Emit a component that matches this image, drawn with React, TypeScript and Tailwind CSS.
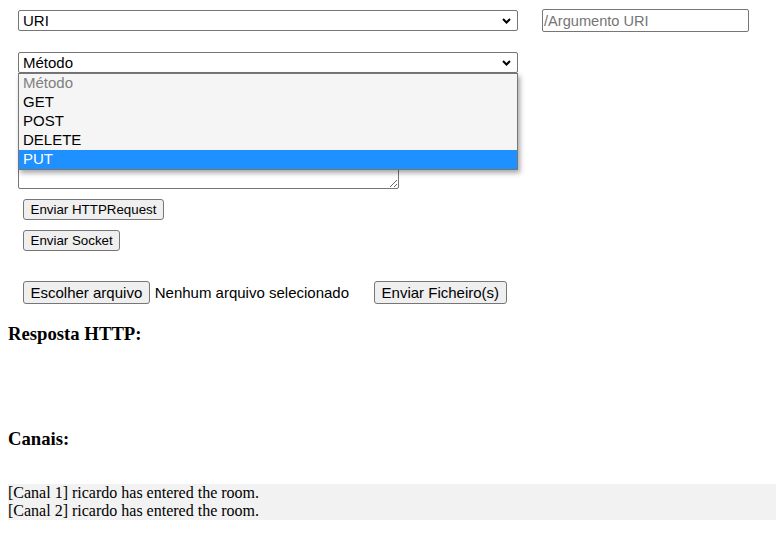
const sans = { fontFamily: '"Liberation Sans", Arial, sans-serif' }

function Chevron() {
  return (
    <svg width="9" height="6" viewBox="0 0 9 6" className="shrink-0">
      <path d="M1 1 L4.5 4.5 L8 1" fill="none" stroke="#000" strokeWidth="2" />
    </svg>
  )
}

function FakeSelect({ label }: { label: string }) {
  return (
    <div className="flex h-[21px] w-[500px] items-center justify-between rounded-[2px] border border-[#767676] bg-white pl-[4px] pr-[6px] text-[15px] text-black">
      <span className="leading-none">{label}</span>
      <Chevron />
    </div>
  )
}

function Btn({ children, big }: { children: React.ReactNode; big?: boolean }) {
  return (
    <button
      className={
        'rounded-[3px] border border-[#767676] bg-[#efefef] px-[6.5px] text-black ' +
        (big ? 'h-[23px] text-[15px]' : 'h-[21px] text-[13.33px]')
      }
    >
      {children}
    </button>
  )
}

const options = ['Método', 'GET', 'POST', 'DELETE', 'PUT']

export default function App() {
  return (
    <div className="relative min-h-[537px] w-[776px] bg-white pl-[8px] text-black">
      <div className="pl-[10px] pt-[9px]" style={sans}>
        <div className="flex items-center gap-[24px]">
          <FakeSelect label="URI" />
          <input
            placeholder="/Argumento URI"
            className="h-[23px] w-[207px] rounded-[2px] border border-[#767676] px-[1px] text-[14.6px] placeholder:text-[#757575]"
          />
        </div>

        <div className="relative mt-[20px]">
          <FakeSelect label="Método" />
          <div className="absolute left-0 top-[21px] z-10 w-[500px] border border-[#767676] bg-[#f5f5f5] text-[15px] shadow-[2px_3px_5px_rgba(0,0,0,0.35)]">
            {options.map((o, i) => (
              <div
                key={o}
                className={
                  'flex h-[19px] items-center pl-[4px] ' +
                  (i === 0
                    ? 'text-[#808080]'
                    : i === 4
                      ? 'bg-[#1e90ff] text-white'
                      : 'text-black')
                }
              >
                {o}
              </div>
            ))}
          </div>
        </div>

        <textarea className="mt-[27px] block h-[89px] w-[381px] rounded-[2px] border border-[#767676]" />

        <div className="mt-[10px] flex flex-col items-start gap-[10px] pl-[5px]">
          <Btn>Enviar HTTPRequest</Btn>
          <Btn>Enviar Socket</Btn>
        </div>

        <div className="mt-[30px] flex items-center pl-[5px] text-[15px]">
          <Btn big>Escolher arquivo</Btn>
          <span className="ml-[5px]">Nenhum arquivo selecionado</span>
          <span className="ml-[25px]">
            <Btn big>Enviar Ficheiro(s)</Btn>
          </span>
        </div>
      </div>

      <div style={{ fontFamily: '"Liberation Serif", "Times New Roman", serif' }}>
        <h3 className="mt-[18px] text-[18.72px] font-bold leading-[22px]">Resposta HTTP:</h3>
        <h3 className="mt-[83px] text-[18.72px] font-bold leading-[22px]">Canais:</h3>
        <div className="mt-[34px] bg-[#f2f2f2] text-[16px] leading-[18px]">
          <div>[Canal 1] ricardo has entered the room.</div>
          <div>[Canal 2] ricardo has entered the room.</div>
        </div>
      </div>
    </div>
  )
}
